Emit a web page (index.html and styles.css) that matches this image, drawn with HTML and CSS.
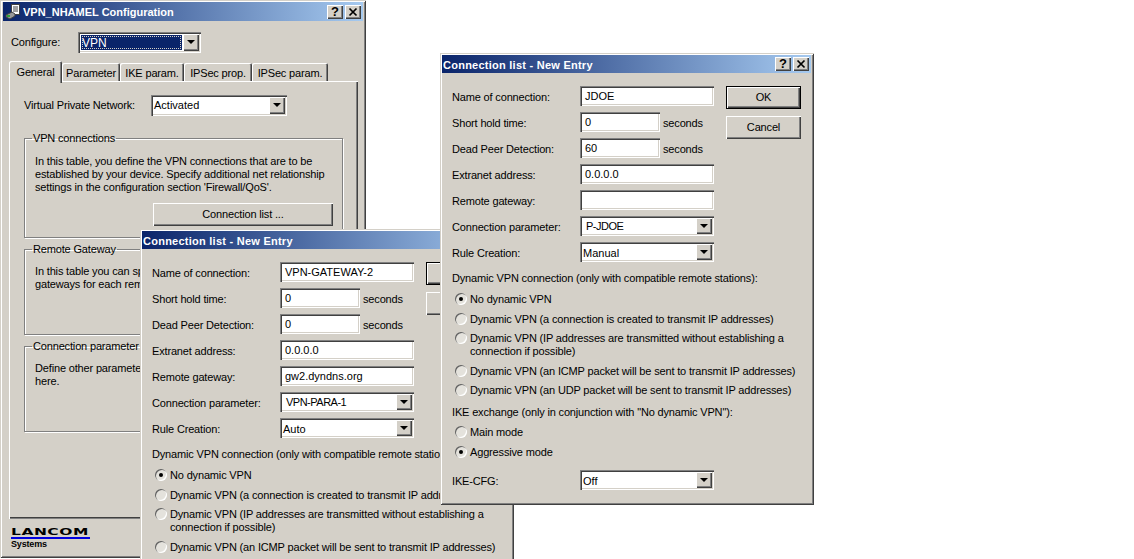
FILE: index.html
```html
<!DOCTYPE html>
<html lang="en">
<head>
<meta charset="utf-8">
<title>VPN configuration</title>
<link rel="stylesheet" href="styles.css">
</head>
<body>
<div class="desktop">

  <section class="window main-window">
    <header class="titlebar">
      <svg class="app-icon" width="16" height="16" viewBox="0 0 16 16">
        <rect x="6.5" y="0.5" width="8" height="10" fill="#fff" stroke="#404040"/>
        <path d="M8 3h5M8 5h5M8 7h5" stroke="#404040"/>
        <path d="M1 11l6-3 3 2v2l-5 3-4-2z" fill="#9a9a9a" stroke="#404040"/>
        <rect x="2" y="11" width="3" height="2" fill="#2e9e3a"/>
      </svg>
      <span class="title-text">VPN_NHAMEL Configuration</span>
      <span class="title-buttons">
        <span class="title-btn help">?</span>
        <span class="title-btn"><svg width="10" height="10" viewBox="0 0 10 10"><path d="M1.5 1.5l7 7M8.500 1.500l-7 7" stroke="#000" stroke-width="1.700"/></svg></span>
      </span>
    </header>
    <div class="configure-row">
      <span class="configure-label">Configure:</span>
      <div class="combo configure-combo">
        <span class="combo-value selected"><span class="focus">VPN</span></span>
        <span class="combo-btn"></span>
      </div>
    </div>
    <nav class="tabs">
      <span class="tab active tab-general">General</span>
      <span class="tab tab-parameter">Parameter</span>
      <span class="tab tab-ike">IKE param.</span>
      <span class="tab tab-prop">IPSec prop.</span>
      <span class="tab tab-param">IPSec param.</span>
    </nav>
    <div class="tab-pane">
      <div class="vpn-row">
        <span class="vpn-label">Virtual Private Network:</span>
        <div class="combo vpn-combo"><span class="combo-value">Activated</span><span class="combo-btn"></span></div>
      </div>
      <fieldset class="group group-connections">
        <legend>VPN connections</legend>
        <p>In this table, you define the VPN connections that are to be<br>established by your device. Specify additional net relationship<br>settings in the configuration section 'Firewall/QoS'.</p>
        <button class="btn list-btn" type="button">Connection list ...</button>
      </fieldset>
      <fieldset class="group group-gateway">
        <legend>Remote Gateway</legend>
        <p>In this table you can specify additional remote<br>gateways for each remote station.</p>
      </fieldset>
      <fieldset class="group group-param">
        <legend>Connection parameter</legend>
        <p>Define other parameters for the VPN connections<br>here.</p>
      </fieldset>
    </div>
    <footer class="brand">
      <div class="brand-name"><span>LANCOM</span></div>
      <div class="brand-sub">Systems</div>
    </footer>
  </section>

  <section class="window dialog dialog-back">
    <header class="titlebar"><span class="title-text">Connection list - New Entry</span></header>
    <div class="dialog-body">
      <div class="form-col">
        <div class="form-grid">
          <label>Name of connection:</label><div class="field wide">VPN-GATEWAY-2</div>
          <label>Short hold time:</label><div class="with-unit"><div class="field short">0</div><span>seconds</span></div>
          <label>Dead Peer Detection:</label><div class="with-unit"><div class="field short">0</div><span>seconds</span></div>
          <label>Extranet address:</label><div class="field wide">0.0.0.0</div>
          <label>Remote gateway:</label><div class="field wide">gw2.dyndns.org</div>
          <label>Connection parameter:</label><div class="combo form-combo"><span class="combo-value pad">VPN-PARA-1</span><span class="combo-btn"></span></div>
          <label>Rule Creation:</label><div class="combo form-combo"><span class="combo-value">Auto</span><span class="combo-btn"></span></div>
        </div>
        <p class="section-label dyn-label">Dynamic VPN connection (only with compatible remote stations):</p>
        <div class="radio-row"><span class="radio on"></span><span>No dynamic VPN</span></div>
        <div class="radio-row"><span class="radio"></span><span>Dynamic VPN (a connection is created to transmit IP addresses)</span></div>
        <div class="radio-row tight"><span class="radio"></span><span>Dynamic VPN (IP addresses are transmitted without establishing a<br>connection if possible)</span></div>
        <div class="radio-row"><span class="radio"></span><span>Dynamic VPN (an ICMP packet will be sent to transmit IP addresses)</span></div>
      </div>
      <div class="btn-col">
        <button class="btn default" type="button">OK</button>
        <button class="btn" type="button">Cancel</button>
      </div>
    </div>
  </section>

  <section class="window dialog dialog-front">
    <header class="titlebar">
      <span class="title-text">Connection list - New Entry</span>
      <span class="title-buttons">
        <span class="title-btn help">?</span>
        <span class="title-btn"><svg width="10" height="10" viewBox="0 0 10 10"><path d="M1.5 1.5l7 7M8.500 1.500l-7 7" stroke="#000" stroke-width="1.700"/></svg></span>
      </span>
    </header>
    <div class="dialog-body">
      <div class="form-col">
        <div class="form-grid">
          <label>Name of connection:</label><div class="field wide">JDOE</div>
          <label>Short hold time:</label><div class="with-unit"><div class="field short">0</div><span>seconds</span></div>
          <label>Dead Peer Detection:</label><div class="with-unit"><div class="field short">60</div><span>seconds</span></div>
          <label>Extranet address:</label><div class="field wide">0.0.0.0</div>
          <label>Remote gateway:</label><div class="field wide"></div>
          <label>Connection parameter:</label><div class="combo form-combo"><span class="combo-value pad">P-JDOE</span><span class="combo-btn"></span></div>
          <label>Rule Creation:</label><div class="combo form-combo"><span class="combo-value">Manual</span><span class="combo-btn"></span></div>
        </div>
        <p class="section-label dyn-label">Dynamic VPN connection (only with compatible remote stations):</p>
        <div class="radio-row"><span class="radio on"></span><span>No dynamic VPN</span></div>
        <div class="radio-row"><span class="radio"></span><span>Dynamic VPN (a connection is created to transmit IP addresses)</span></div>
        <div class="radio-row tight"><span class="radio"></span><span>Dynamic VPN (IP addresses are transmitted without establishing a<br>connection if possible)</span></div>
        <div class="radio-row"><span class="radio"></span><span>Dynamic VPN (an ICMP packet will be sent to transmit IP addresses)</span></div>
        <div class="radio-row tight"><span class="radio"></span><span>Dynamic VPN (an UDP packet will be sent to transmit IP addresses)</span></div>
        <p class="section-label ike-label">IKE exchange (only in conjunction with "No dynamic VPN"):</p>
        <div class="radio-row"><span class="radio"></span><span>Main mode</span></div>
        <div class="radio-row"><span class="radio on"></span><span>Aggressive mode</span></div>
        <div class="form-grid cfg-grid">
          <label>IKE-CFG:</label><div class="combo form-combo"><span class="combo-value">Off</span><span class="combo-btn"></span></div>
        </div>
      </div>
      <div class="btn-col">
        <button class="btn default" type="button">OK</button>
        <button class="btn" type="button">Cancel</button>
      </div>
    </div>
  </section>

</div>
</body>
</html>
```
FILE: styles.css
```css
* { box-sizing: border-box; }
html, body { margin: 0; padding: 0; background: #fff; }
.desktop {
  position: relative; width: 1134px; height: 559px; overflow: hidden;
  font: 11px/13px "Liberation Sans", "DejaVu Sans", sans-serif; color: #000;
  letter-spacing: -.16px;
}
.window {
  position: absolute; background: #d4d0c8; padding: 2px;
  box-shadow: inset 1px 1px 0 #d4d0c8, inset -1px -1px 0 #404040, inset 2px 2px 0 #fff, inset -2px -2px 0 #808080;
}
.main-window { left: 0; top: 0; width: 366px; height: 558px; }
.dialog { width: 374px; }
.dialog-back { left: 140px; top: 229px; height: 340px; }
.dialog-front { left: 440px; top: 53px; height: 452px; }

.titlebar {
  display: flex; align-items: center; height: 18px; margin: 0 1px 0 0; padding: 0 2px 0 1px;
  background: linear-gradient(90deg, #0a246a, #a6caf0); color: #fff;
  font-weight: 700; letter-spacing: .25px;
}
.main-window .titlebar { height: 19px; margin-left: 1px; padding-left: 2px; letter-spacing: 0; }
.app-icon { flex: none; margin: 0 2px 0 0; }
.title-text { flex: 1; white-space: nowrap; overflow: hidden; padding-top: 2px; }
.title-buttons { display: flex; gap: 2px; }
.title-btn {
  display: flex; align-items: center; justify-content: center;
  width: 16px; height: 14px; background: #d4d0c8; color: #000; font: 700 13px/14px "Liberation Sans", sans-serif; letter-spacing: 0;
  box-shadow: inset 1px 1px 0 #fff, inset -1px -1px 0 #404040, inset -2px -2px 0 #808080;
}

/* Shared inputs */
.field, .combo {
  background: #fff; height: 20px;
  box-shadow: inset 1px 1px 0 #808080, inset 2px 2px 0 #404040, inset -1px -1px 0 #fff, inset -2px -2px 0 #d4d0c8;
  border: 0;
}
.field { padding: 3px 5px 0; line-height: 15px; letter-spacing: 0; }
.wide { width: 134px; }
.short { width: 80px; }
.combo { display: flex; padding: 2px; letter-spacing: 0; }
.combo-value { flex: 1; padding: 2px 0 0 1px; line-height: 13px; }
.form-combo .combo-value { padding-top: 3px; }
.form-combo .combo-value.pad { padding-left: 4px; padding-top: 2px; letter-spacing: -.5px; }
.combo-value.selected { background: #0a246a; color: #fff; padding: 1px; margin: 1px; }
.focus { display: block; height: 100%; outline: 1px dotted #d4d0c8; outline-offset: -1px; font-size: 12px; line-height: 14px; }
.combo-btn {
  flex: none; width: 16px; position: relative; background: #d4d0c8;
  box-shadow: inset 1px 1px 0 #fff, inset -1px -1px 0 #404040, inset -2px -2px 0 #808080;
}
.combo-btn::after {
  content: ""; position: absolute; left: 4px; top: 6px;
  border: 4px solid transparent; border-top: 4px solid #000; border-bottom: 0;
}
.btn {
  display: block; font: inherit; letter-spacing: inherit; background: #d4d0c8; color: #000; border: 0; padding: 0; margin: 0;
  box-shadow: inset 1px 1px 0 #fff, inset -1px -1px 0 #404040, inset -2px -2px 0 #808080;
}
.btn.default { box-shadow: inset 0 0 0 1px #000, inset 2px 2px 0 #fff, inset -2px -2px 0 #404040, inset -3px -3px 0 #808080; }

/* Main window */
.configure-row { display: flex; align-items: center; padding: 10px 0 0 9px; height: 33px; }
.configure-label { width: 67px; }
.configure-combo { width: 123px; height: 21px; }
.tabs { display: flex; align-items: flex-end; height: 23px; margin: 5px 0 0 7px; position: relative; z-index: 1; }
.tab {
  height: 18px; padding-top: 4px; text-align: center; background: #d4d0c8; margin-bottom: 1px;
  box-shadow: inset 1px 1px 0 #fff, inset -1px 0 0 #404040, inset -2px 0 0 #808080;
  border-radius: 2px 2px 0 0;
}
.tab.active { height: 22px; margin-bottom: -1px; padding-top: 5px; }
.tab-general { width: 53px; }
.tab-parameter { width: 58px; }
.tab-ike { width: 64px; }
.tab-prop { width: 68px; }
.tab-param { width: 76px; }
.tab-pane {
  margin: -1px 0 0 7px; width: 349px; height: 438px; padding: 14px 14px 0 15px;
  box-shadow: inset 1px 1px 0 #fff, inset -1px 0 0 #404040, inset -2px 0 0 #808080, inset 0 -1px 0 #808080, inset 0 -2px 0 #404040;
}
.vpn-row { display: flex; align-items: center; height: 21px; }
.vpn-label { width: 127px; }
.vpn-combo { width: 136px; height: 21px; }
.group {
  margin: 0; padding: 0 10px; width: 319px; min-width: 0;
  border: 1px solid #808080; box-shadow: 1px 1px 0 #fff, inset 1px 1px 0 #fff;
}
.group legend { margin-left: -3px; padding: 0 1px; height: 13px; line-height: 13px; }
.group p { margin: 0; white-space: nowrap; }
.group-connections { margin-top: 16px; height: 106px; }
.group-connections p { margin-top: 10px; }
.group-gateway { margin-top: 5px; height: 92px; }
.group-gateway p { margin-top: 9px; }
.group-param { margin-top: 5px; height: 92px; }
.group-param p { margin-top: 9px; }
.list-btn { width: 180px; height: 23px; margin: 9px 0 0 118px; }
.brand { padding: 7px 0 0 9px; }
.brand-name {
  width: 79px; height: 13px; padding-top: 1px; font: 700 9px/10px "DejaVu Sans", sans-serif;
  border-bottom: 2px solid #0000e0; white-space: nowrap;
}
.brand-name span { display: block; transform: scaleX(1.72); transform-origin: left; letter-spacing: .3px; }
.brand-sub { font: 700 9px/11px "Liberation Sans", sans-serif; }

/* Dialog */
.dialog-body { display: flex; padding: 13px 0 0 10px; }
.form-col { width: 274px; }
.form-grid { display: grid; grid-template-columns: 128px auto; row-gap: 6px; align-items: center; justify-items: start; }
.form-grid label { padding-top: 2px; }
.form-combo { width: 134px; }
.with-unit { display: flex; align-items: center; gap: 3px; }
.with-unit span { padding-top: 2px; }
.section-label { margin: 10px 0 0; height: 13px; white-space: nowrap; }
.dyn-label { height: 14px; }
.ike-label { margin-top: 9px; }
.radio-row { display: flex; gap: 3px; margin-top: 7px; width: 340px; white-space: nowrap; }
.radio-row.tight { margin-top: 6px; }
.radio-row > span:last-child { flex: 1; }
.radio {
  flex: none; width: 12px; height: 12px; margin: 0 0 0 3px; border-radius: 50%; background: #e4e2dc; position: relative;
  box-shadow: inset 1px 1px 0 #606060, inset -1px -1px 0 #fff;
}
.radio.on::after { content: ""; position: absolute; left: 4px; top: 4px; width: 4px; height: 4px; border-radius: 50%; background: #000; }
.cfg-grid { margin-top: 11px; }
.btn-col { display: flex; flex-direction: column; gap: 7px; flex: none; }
.btn-col .btn { width: 75px; height: 23px; }
```
